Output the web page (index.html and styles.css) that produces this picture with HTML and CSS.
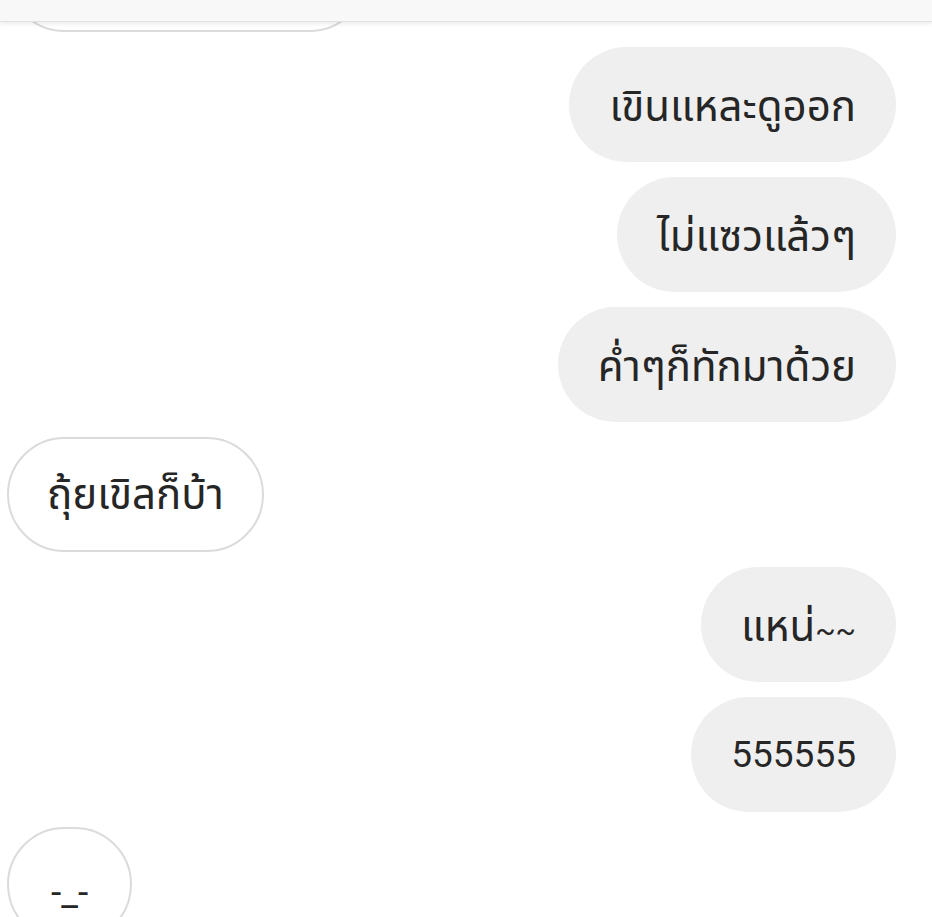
FILE: index.html
```html
<!DOCTYPE html>
<html lang="th">
<head>
    <meta charset="UTF-8">
    <meta name="viewport" content="width=device-width, initial-scale=1.0">
    <title>Chat</title>
    <link rel="stylesheet" href="styles.css">
</head>
<body>

<div class="topBar"></div>

<div class="thread">
    <div class="msg theirs earlier"></div>
    <div class="msg mine thai">เขินแหละดูออก</div>
    <div class="msg mine thai">ไม่แซวแล้วๆ</div>
    <div class="msg mine thai">ค่ำๆก็ทักมาด้วย</div>
    <div class="msg theirs thai">ถุ้ยเขิลก็บ้า</div>
    <div class="msg mine thai">แหน่<span class="tilde">~~</span></div>
    <div class="msg mine">555555</div>
    <div class="msg theirs face">-_-</div>
</div>

</body>
</html>
```

FILE: styles.css
```css
/* Global */
body {
    margin: 0;
    padding: 0;
    background: #ffffff;
    font-family: 'Roboto', 'Noto Sans', 'Noto Sans Thai', sans-serif;
    color: #262626;
    overflow: hidden;
    height: 917px;
}

/* Top bar overlaps the scrolled thread */
.topBar {
    position: absolute;
    top: 0;
    left: 0;
    right: 0;
    height: 21px;
    background: #f8f8f8;
    border-bottom: 1px solid #e2e2e2;
    box-shadow: 0 2px 4px rgba(0, 0, 0, 0.08);
    z-index: 2;
}

/* Message list */
.thread {
    display: flex;
    flex-direction: column;
    gap: 15px;
    margin-top: -83px;
    padding: 0 36px 0 7px;
}

.msg {
    box-sizing: border-box;
    height: 115px;
    padding: 0 40px;
    border-radius: 58px;
    font-size: 37px;
    line-height: 115px;
    white-space: nowrap;
}

.thai {
    font-size: 42px;
    line-height: 119px;
}

.tilde {
    font-size: 30px;
}

.mine {
    align-self: flex-end;
    background: #efefef;
}

.theirs {
    align-self: flex-start;
    background: #ffffff;
    border: 2px solid #dbdbdb;
    line-height: 111px;
    padding: 0 38px;
}

.earlier {
    width: 360px;
}

.face {
    padding: 16px 42px 0;
    line-height: 95px;
}
```
